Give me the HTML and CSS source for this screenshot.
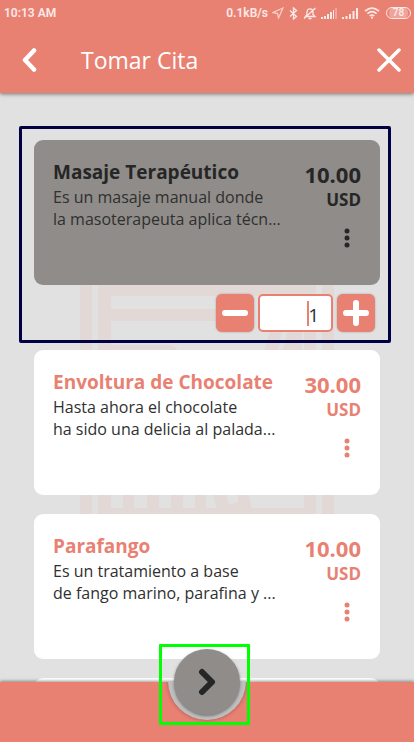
FILE: index.html
```html
<!DOCTYPE html>
<html lang="es">
<head>
<meta charset="utf-8">
<meta name="viewport" content="width=device-width, initial-scale=1">
<title>Tomar Cita</title>
<link rel="stylesheet" href="styles.css">
</head>
<body>
<header class="header">
  <div class="status">
    <span>10:13 AM</span>
    <div class="status-right">
      <span>0.1kB/s</span>
      <svg width="12" height="12" viewBox="0 0 12 12" class="line faint"><path d="M11 1 1 5.500 5.500 6.500 6.500 11Z"/></svg>
      <svg class="line bt" width="9" height="13" viewBox="0 0 9 13"><path d="M1 3.500 7.500 9.500 4.500 12V1L7.500 3.500 1 9.500"/></svg>
      <svg class="line bell" width="14" height="13" viewBox="0 0 14 13"><path d="M2.500 9.500 4 7.500V5C4 .8 10 .8 10 5V7.500L12 9.500ZM5.500 11.500H8.500M1 11.500 12.500 1"/></svg>
      <svg class="solid" width="16" height="11" viewBox="0 0 16 11"><path d="M0 9h2v2H0zM3 8h2v3H3zM6 6h2v5H6zM9 4h2v7H9zM12 2h1v9h-1z"/><path opacity=".35" d="M14 0h2v11h-2z"/></svg>
      <svg class="solid sig" width="16" height="11" viewBox="0 0 16 11"><path d="M0 9h2v2H0zM3.500 8h2v3h-2zM7 6h2v5H7zM10.500 3h2v8h-2zM14 0h2v11h-2z"/></svg>
      <svg class="wifi" width="16" height="12" viewBox="0 0 16 12"><path d="M1 4.200Q8-1.800 15 4.200M3.400 6.700Q8 2.700 12.600 6.700M5.700 9Q8 7 10.300 9"/><circle cx="8" cy="10.700" r="1.100"/></svg>
      <span class="battery">78</span>
    </div>
  </div>
  <nav class="nav">
    <button class="icon-btn" aria-label="Atrás"><svg width="18" height="24" viewBox="0 0 18 24"><path d="M14 2.500 5 12 14 21.500" stroke-width="4.500"/></svg></button>
    <h1>Tomar Cita</h1>
    <button class="icon-btn" aria-label="Cerrar"><svg width="24" height="24" viewBox="0 0 24 24"><path d="M2 2 22 22M22 2 2 22" stroke-width="3.500"/></svg></button>
  </nav>
</header>

<main class="content">
  <svg class="watermark" width="254" height="230" viewBox="0 0 254 230" aria-hidden="true">
    <path d="M0 0H12V230H0ZM18 0H236V12H31V25H152V37H31V61H92L103 70H31V224H224V12H236V230H18ZM242 0H254V230H242Z"/>
    <path d="M43 205H54V226H43ZM67 205H79V226H67ZM91 205H103V226H91ZM115 205H126V226H115ZM132 205H144L149 221 158 218V205H168L172 226H137ZM192 38H204L197 70H184ZM210 38H222V70H202Z"/>
  </svg>

  <section class="selected">
    <article class="card card-active">
      <div class="info">
        <h2>Masaje Terapéutico</h2>
        <p>Es un masaje manual donde<br>la masoterapeuta aplica técn...</p>
      </div>
      <div class="side">
        <strong class="price">10.00</strong>
        <span class="currency">USD</span>
        <button class="more" aria-label="Más opciones"><svg width="6" height="20" viewBox="0 0 6 20"><circle cx="3" cy="3" r="2.500"/><circle cx="3" cy="10" r="2.500"/><circle cx="3" cy="17" r="2.500"/></svg></button>
      </div>
    </article>
    <div class="stepper">
      <button class="step" aria-label="Restar"><svg width="26" height="26" viewBox="0 0 26 26"><path d="M3 13H23"/></svg></button>
      <div class="qty-box">
        <span class="caret"></span>
        <input class="qty" type="text" value="1" size="1" inputmode="numeric" aria-label="Cantidad">
      </div>
      <button class="step" aria-label="Sumar"><svg width="26" height="26" viewBox="0 0 26 26"><path d="M3 13H23M13 3V23"/></svg></button>
    </div>
  </section>

  <div class="list">
    <article class="card">
      <div class="info">
        <h2>Envoltura de Chocolate</h2>
        <p>Hasta ahora el chocolate<br>ha sido una delicia al palada...</p>
      </div>
      <div class="side">
        <strong class="price">30.00</strong>
        <span class="currency">USD</span>
        <button class="more" aria-label="Más opciones"><svg width="6" height="20" viewBox="0 0 6 20"><circle cx="3" cy="3" r="2.500"/><circle cx="3" cy="10" r="2.500"/><circle cx="3" cy="17" r="2.500"/></svg></button>
      </div>
    </article>
    <article class="card">
      <div class="info">
        <h2>Parafango</h2>
        <p>Es un tratamiento a base<br>de fango marino, parafina y ...</p>
      </div>
      <div class="side">
        <strong class="price">10.00</strong>
        <span class="currency">USD</span>
        <button class="more" aria-label="Más opciones"><svg width="6" height="20" viewBox="0 0 6 20"><circle cx="3" cy="3" r="2.500"/><circle cx="3" cy="10" r="2.500"/><circle cx="3" cy="17" r="2.500"/></svg></button>
      </div>
    </article>
    <article class="card"></article>
  </div>
</main>

<footer class="footer">
  <div class="bar"><span class="notch"></span></div>
  <div class="next-frame">
    <button class="next" aria-label="Siguiente"><svg width="18" height="28" viewBox="0 0 18 28"><path d="M4 4 14 14 4 24"/></svg></button>
  </div>
</footer>
</body>
</html>
```
FILE: styles.css
```css
:root {
  --coral: #e98173;
  --ink: #303030;
  --grey: #8f8c89;
}

* { box-sizing: border-box; }

body {
  margin: 0;
  height: 100vh;
  display: flex;
  flex-direction: column;
  overflow: hidden;
  background: #e1e1e1;
  color: var(--ink);
  font-family: "Open Sans", "Noto Sans", sans-serif;
}

button {
  padding: 0;
  border: 0;
  background: none;
  color: inherit;
  cursor: pointer;
}

svg { display: block; }

h1, h2, p { margin: 0; }

.header {
  position: relative;
  z-index: 1;
  background: var(--coral);
  color: #fff;
  box-shadow: 0 1px 4px rgba(0, 0, 0, .5);
}

.status {
  display: flex;
  justify-content: space-between;
  align-items: center;
  height: 26px;
  padding: 0 3px 0 4px;
  color: #fbe9e6;
  font: 600 12px/26px Roboto, sans-serif;
}

.status-right {
  display: flex;
  align-items: center;
  gap: 4px;
}

.line {
  fill: none;
  stroke: currentColor;
  stroke-width: 1.3;
}

.faint { opacity: .75; }
.bt { margin-left: 1px; }
.bell { margin-left: 1px; }
.sig { margin-left: 1px; }
.solid { fill: currentColor; }

.wifi {
  margin-left: 2px;
  fill: none;
  stroke: currentColor;
  stroke-width: 1.6;
}

.wifi circle {
  fill: currentColor;
  stroke: none;
}

.battery {
  width: 25px;
  margin-left: 2px;
  border: 1px solid currentColor;
  border-radius: 6px;
  background: #f0a399;
  background-clip: content-box;
  padding: 0 2px;
  font-size: 10px;
  line-height: 10px;
  text-align: center;
}

.nav {
  display: flex;
  align-items: center;
  height: 67px;
  padding: 0 13px 0 20px;
}

.nav h1 {
  flex: 1;
  margin-left: 43px;
  font-size: 23px;
  font-weight: 400;
  line-height: 30px;
}

.icon-btn path,
.step path,
.next path {
  fill: none;
  stroke: currentColor;
  stroke-linecap: round;
  stroke-linejoin: round;
}

.content {
  position: relative;
  flex: 1;
  min-height: 0;
  overflow: hidden;
  padding: 33px 23px 0 19px;
}

.watermark {
  position: absolute;
  top: 191px;
  left: 50%;
  transform: translateX(-50%);
  fill: #e2d8d5;
}

.selected {
  position: relative;
  border: 3px solid #000042;
  border-radius: 2px;
  padding: 11px 8px 8px 12px;
}

.list {
  position: relative;
  display: grid;
  gap: 19px;
  padding: 7px 11px 0 15px;
}

.card {
  display: flex;
  justify-content: space-between;
  height: 145px;
  padding: 19px;
  border-radius: 9px;
  background: #fff;
}

.card h2 {
  color: var(--coral);
  font-size: 19px;
  font-weight: 700;
  line-height: 27px;
  white-space: nowrap;
}

.card p {
  font-size: 16px;
  line-height: 22px;
  white-space: nowrap;
}

.side {
  display: flex;
  flex-direction: column;
  align-items: flex-end;
  color: var(--coral);
}

.price {
  font-size: 22px;
  line-height: 30px;
}

.currency {
  font-size: 17px;
  font-weight: 700;
  line-height: 22px;
}

.more {
  margin: 17px 11px 0;
}

.more circle { fill: currentColor; }

.card-active { background: var(--grey); }

.card-active h2,
.card-active .side { color: #262626; }

.stepper {
  display: flex;
  justify-content: flex-end;
  gap: 4px;
  margin-top: 9px;
  padding-right: 5px;
}

.step {
  display: grid;
  place-items: center;
  width: 38px;
  height: 38px;
  border-radius: 6px;
  background: var(--coral);
  color: #fff;
  box-shadow: 0 0 2px rgba(0, 0, 0, .3);
}

.step path { stroke-width: 6; }

.qty-box {
  position: relative;
  width: 75px;
  height: 38px;
  border: 2px solid var(--coral);
  border-radius: 5px;
  background: #fff;
}

.qty {
  display: block;
  width: 100%;
  height: 100%;
  padding: 4px 12px 0 0;
  border: 0;
  background: none;
  color: var(--ink);
  font: 19px "Open Sans", sans-serif;
  text-align: right;
  outline: 0;
}

.caret {
  position: absolute;
  top: 5px;
  right: 22px;
  width: 2px;
  height: 25px;
  background: var(--coral);
}

.footer {
  position: relative;
  z-index: 1;
}

.bar {
  position: relative;
  height: 60px;
  overflow: hidden;
  background: var(--coral);
  box-shadow: 0 -1px 3px rgba(0, 0, 0, .4);
}

.notch {
  position: absolute;
  top: -40px;
  left: 50%;
  width: 78px;
  height: 78px;
  border-radius: 50%;
  background: #bfbfbf;
  box-shadow: 0 0 4px rgba(0, 0, 0, .3);
  transform: translateX(-50%);
}

.next-frame {
  position: absolute;
  top: -38px;
  left: 50%;
  display: grid;
  place-items: start center;
  width: 91px;
  height: 81px;
  margin-left: -48px;
  padding-top: 2px;
  border: 3px solid #0f0;
  border-radius: 1px;
}

.next {
  display: grid;
  place-items: center;
  width: 66px;
  height: 66px;
  margin-left: 4px;
  border-radius: 50%;
  background: var(--grey);
  color: #262626;
  box-shadow: 0 1px 3px rgba(0, 0, 0, .4);
}

.next path { stroke-width: 6; }
```
